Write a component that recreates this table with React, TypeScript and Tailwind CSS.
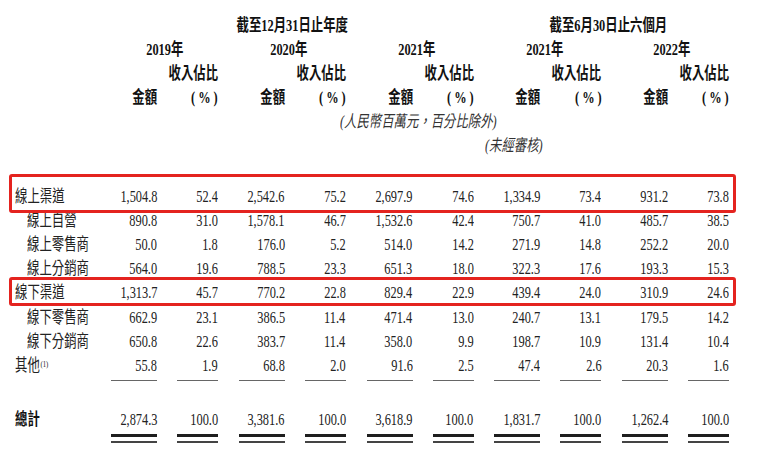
import React from "react";

const GRID = "grid grid-cols-[97px_60px_61px_repeat(4,66.75px_61px)]";

type Row = { label: string; values: string[]; sub?: boolean; tall?: boolean; note?: boolean };

const rows: Row[] = [
  { label: "線上渠道", values: ["1,504.8", "52.4", "2,542.6", "75.2", "2,697.9", "74.6", "1,334.9", "73.4", "931.2", "73.8"] },
  { label: "線上自營", sub: true, values: ["890.8", "31.0", "1,578.1", "46.7", "1,532.6", "42.4", "750.7", "41.0", "485.7", "38.5"] },
  { label: "線上零售商", sub: true, values: ["50.0", "1.8", "176.0", "5.2", "514.0", "14.2", "271.9", "14.8", "252.2", "20.0"] },
  { label: "線上分銷商", sub: true, values: ["564.0", "19.6", "788.5", "23.3", "651.3", "18.0", "322.3", "17.6", "193.3", "15.3"] },
  { label: "線下渠道", tall: true, values: ["1,313.7", "45.7", "770.2", "22.8", "829.4", "22.9", "439.4", "24.0", "310.9", "24.6"] },
  { label: "線下零售商", sub: true, values: ["662.9", "23.1", "386.5", "11.4", "471.4", "13.0", "240.7", "13.1", "179.5", "14.2"] },
  { label: "線下分銷商", sub: true, values: ["650.8", "22.6", "383.7", "11.4", "358.0", "9.9", "198.7", "10.9", "131.4", "10.4"] },
  { label: "其他", note: true, tall: true, values: ["55.8", "1.9", "68.8", "2.0", "91.6", "2.5", "47.4", "2.6", "20.3", "1.6"] },
];

const total = ["2,874.3", "100.0", "3,381.6", "100.0", "3,618.9", "100.0", "1,831.7", "100.0", "1,262.4", "100.0"];
const years = ["2019年", "2020年", "2021年", "2021年", "2022年"];

// the source table is set in a narrow face, so squeeze the glyphs horizontally
function T({ children, origin = "origin-right" }: { children: React.ReactNode; origin?: string }) {
  return <span className={`inline-block whitespace-nowrap scale-x-[0.75] ${origin}`}>{children}</span>;
}

function Rules({ thick }: { thick?: boolean }) {
  return (
    <div className={GRID}>
      {total.map((_, i) => (
        <div key={i} className={`flex justify-end ${i === 0 ? "col-start-2" : ""}`}>
          <div className={i % 2 === 0 ? "w-[46px]" : "w-[41px]"}>
            {thick ? (
              <>
                <div className="h-[3px] bg-[#1e1e1e]" />
                <div className="mt-[4px] h-[1.5px] bg-[#444]" />
              </>
            ) : (
              <div className="h-px bg-[#666]" />
            )}
          </div>
        </div>
      ))}
    </div>
  );
}

export default function App() {
  return (
    <div className="relative w-[757px] h-[454px] overflow-hidden bg-white pt-[14px] text-[16.5px] text-[#222] font-['Liberation_Serif','Noto_Sans_CJK_TC',serif]">
      {/* header */}
      <div className={`${GRID} font-bold text-[#111]`}>
        <div className="col-start-2 col-span-6 h-[24px] flex items-center justify-center pl-[14px]">
          <T origin="origin-center">截至12月31日止年度</T>
        </div>
        <div className="col-start-8 col-span-4 h-[24px] flex items-center justify-center pl-[14px]">
          <T origin="origin-center">截至6月30日止六個月</T>
        </div>

        {years.map((y, i) => (
          <div key={i} className={`col-span-2 h-[24px] flex items-center justify-center pl-[14px] ${i === 0 ? "col-start-2" : ""}`}>
            <T origin="origin-center">{y}</T>
          </div>
        ))}

        {years.map((_, i) => (
          <React.Fragment key={i}>
            <div className={`h-[24px] ${i === 0 ? "col-start-2" : ""}`} />
            <div className="h-[24px] flex items-center justify-end">
              <T>收入佔比</T>
            </div>
          </React.Fragment>
        ))}

        {years.map((_, i) => (
          <React.Fragment key={i}>
            <div className={`h-[24px] flex items-center justify-end ${i === 0 ? "col-start-2" : ""}`}>
              <T>金額</T>
            </div>
            <div className="h-[24px] flex items-center justify-end">
              <T>( % )</T>
            </div>
          </React.Fragment>
        ))}
      </div>

      <div className="h-[24px] flex items-center pl-[340px] italic font-normal text-[#333]">
        <T origin="origin-left">(人民幣百萬元，百分比除外)</T>
      </div>
      <div className="h-[24px] flex items-center pl-[485px] italic font-normal text-[#333]">
        <T origin="origin-left">(未經審核)</T>
      </div>

      {/* body */}
      <div className="mt-[27px]">
        {rows.map((r) => (
          <div key={r.label} className={`${GRID} items-center ${r.tall ? "h-[25px]" : "h-[24px]"}`}>
            <div className={r.sub ? "pl-[27px]" : "pl-[15px]"}>
              <T origin="origin-left">
                {r.label}
                {r.note && <sup className="text-[9px] ml-px">(1)</sup>}
              </T>
            </div>
            {r.values.map((v, i) => (
              <div key={i} className="text-right">
                <T>{v}</T>
              </div>
            ))}
          </div>
        ))}
      </div>

      <div className="mt-[1px]">
        <Rules />
      </div>

      <div className={`${GRID} items-center h-[24px] mt-[27px]`}>
        <div className="pl-[15px] font-bold text-[#111]">
          <T origin="origin-left">總計</T>
        </div>
        {total.map((v, i) => (
          <div key={i} className="text-right">
            <T>{v}</T>
          </div>
        ))}
      </div>

      <div className="mt-[2px]">
        <Rules thick />
      </div>

      {/* highlight boxes */}
      <div className="pointer-events-none absolute left-[9px] top-[174px] w-[727px] h-[39px] rounded-[3px] border-[3px] border-[#e4231f]" />
      <div className="pointer-events-none absolute left-[9px] top-[277px] w-[727px] h-[29px] rounded-[3px] border-[3px] border-[#e4231f]" />
    </div>
  );
}
